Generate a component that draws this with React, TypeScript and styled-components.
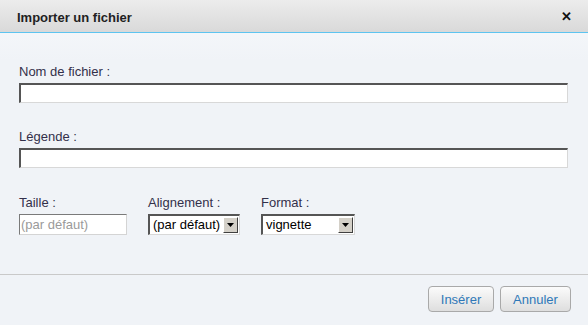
import React from "react";
import styled, { createGlobalStyle } from "styled-components";

const Global = createGlobalStyle`
  html, body { margin: 0; padding: 0; }
  body { font-family: Arial, "Liberation Sans", sans-serif; width: 588px; height: 325px; overflow: hidden; }
`;

const Dialog = styled.div`
  width: 588px;
  height: 325px;
  display: flex;
  flex-direction: column;
  background: linear-gradient(#f8fafc, #f0f3f7 60px, #f0f3f7);
  box-sizing: border-box;
`;

const Header = styled.div`
  height: 32px;
  display: flex;
  align-items: center;
  justify-content: space-between;
  padding: 0 16px 0 17px;
  background: linear-gradient(#ececec, #d9d9d9);
  border-bottom: 1px solid #5dc4f0;
  flex-shrink: 0;
`;

const Title = styled.div`
  font-size: 13px;
  font-weight: bold;
  color: #221e22;
  padding-top: 2px;
`;

const Close = styled.div`
  font-size: 13px;
  font-weight: bold;
  color: #111;
  padding-top: 1px;
`;

const Body = styled.div`
  flex: 1;
  display: flex;
  flex-direction: column;
  padding: 31px 20px 0 19px;
`;

const Field = styled.div<{ $mb?: number }>`
  display: flex;
  flex-direction: column;
  margin-bottom: ${(p) => p.$mb ?? 0}px;
`;

const Label = styled.label`
  font-size: 13px;
  line-height: 16px;
  color: #33304a;
  margin-bottom: 3px;
`;

const TextInput = styled.div<{ $w?: number }>`
  box-sizing: border-box;
  height: 20px;
  width: ${(p) => (p.$w ? `${p.$w}px` : "100%")};
  background: #fff;
  border-style: solid;
  border-width: 2px 1px 1px 2px;
  border-color: #555 #d8d8d8 #d8d8d8 #555;
`;

const SmallInput = styled.div`
  box-sizing: border-box;
  height: 21px;
  width: 108px;
  background: #fff;
  border-style: solid;
  border-width: 1px;
  border-color: #7a7a7a #d4d4d4 #d4d4d4 #7a7a7a;
  font-size: 13px;
  line-height: 19px;
  color: #9a9a9a;
  padding-left: 1px;
`;

const Row = styled.div`
  display: flex;
  gap: 21px;
`;

const Select = styled.div<{ $w: number }>`
  box-sizing: border-box;
  height: 21px;
  width: ${(p) => p.$w}px;
  background: #fff;
  border-style: solid;
  border-width: 2px 1px 1px 2px;
  border-color: #555 #d8d8d8 #d8d8d8 #555;
  display: flex;
  align-items: stretch;
  font-size: 13px;
  color: #000;
`;

const SelectText = styled.div`
  flex: 1;
  line-height: 17px;
  padding-left: 3px;
  white-space: nowrap;
  overflow: hidden;
`;

const Arrow = styled.div`
  width: 15px;
  margin: 1px 1px 1px 0;
  box-sizing: border-box;
  background: #d4d0c8;
  border-style: solid;
  border-width: 1px;
  border-color: #fff #404040 #404040 #fff;
  display: flex;
  align-items: center;
  justify-content: center;
`;

const Divider = styled.div`
  height: 1px;
  background: #c9c9c9;
  flex-shrink: 0;
`;

const Footer = styled.div`
  height: 50px;
  display: flex;
  justify-content: flex-end;
  align-items: flex-start;
  gap: 6px;
  padding: 11px 17px 0 0;
  box-sizing: border-box;
  flex-shrink: 0;
`;

const Button = styled.button<{ $w: number }>`
  box-sizing: border-box;
  width: ${(p) => p.$w}px;
  height: 26px;
  border: 1px solid #a9a9a9;
  border-radius: 4px;
  background: linear-gradient(#fbfbfb, #dedede);
  font-family: Arial, "Liberation Sans", sans-serif;
  font-size: 13px;
  color: #2f78b8;
  padding: 0;
`;

const ArrowIcon = () => (
  <svg width="7" height="4" viewBox="0 0 7 4">
    <path d="M0 0h7L3.5 4z" fill="#000" />
  </svg>
);

export default function App() {
  return (
    <>
      <Global />
      <Dialog>
        <Header>
          <Title>Importer un fichier</Title>
          <Close>✕</Close>
        </Header>
        <Body>
          <Field $mb={26}>
            <Label>Nom de fichier :</Label>
            <TextInput />
          </Field>
          <Field $mb={27}>
            <Label>Légende :</Label>
            <TextInput />
          </Field>
          <Row>
            <Field>
              <Label>Taille :</Label>
              <SmallInput>(par défaut)</SmallInput>
            </Field>
            <Field>
              <Label>Alignement :</Label>
              <Select $w={92}>
                <SelectText>(par défaut)</SelectText>
                <Arrow><ArrowIcon /></Arrow>
              </Select>
            </Field>
            <Field>
              <Label>Format :</Label>
              <Select $w={94}>
                <SelectText>vignette</SelectText>
                <Arrow><ArrowIcon /></Arrow>
              </Select>
            </Field>
          </Row>
        </Body>
        <Divider />
        <Footer>
          <Button $w={66}>Insérer</Button>
          <Button $w={71}>Annuler</Button>
        </Footer>
      </Dialog>
    </>
  );
}
